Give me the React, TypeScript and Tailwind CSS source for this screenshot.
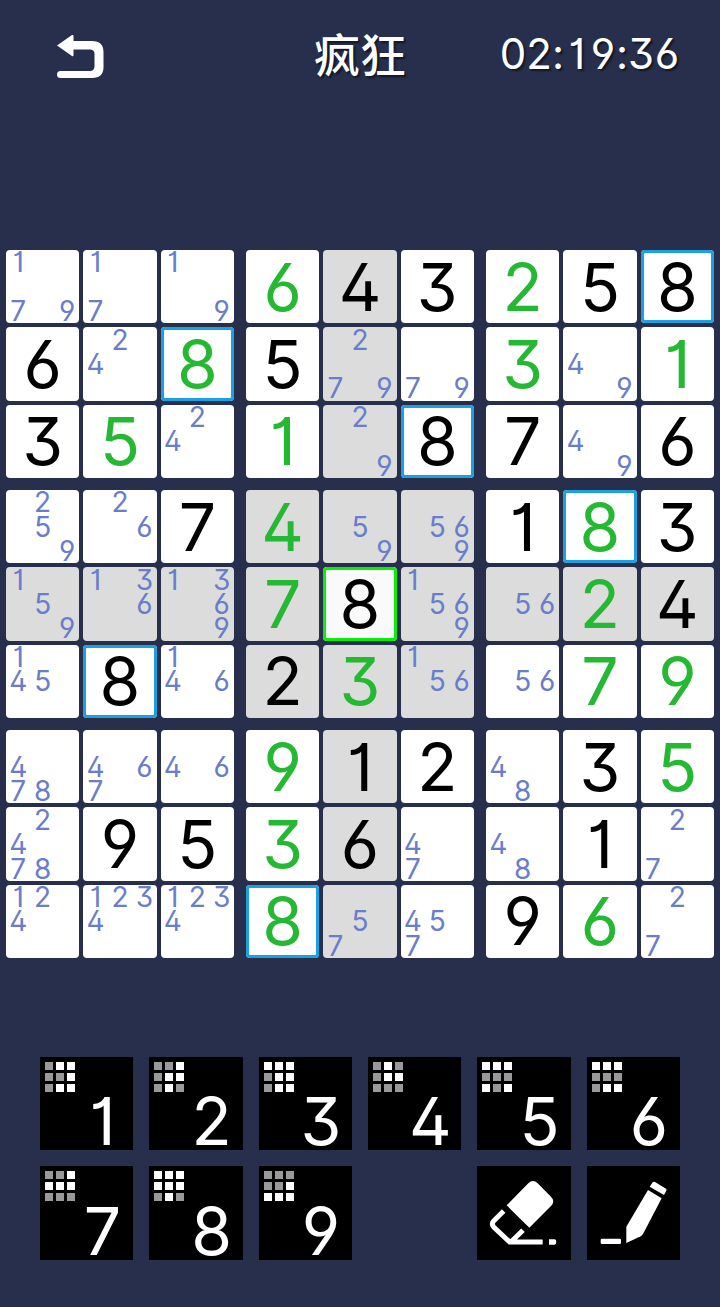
import React from "react";

// "*" = pencil notes, "+" = filled in by the player, plain = given
const rows = [
  "*179 *17 *19 +6 4 3 +2 5 8",
  "6 *24 +8 5 *279 *79 +3 *49 +1",
  "3 +5 *24 +1 *29 8 7 *49 6",
  "*259 *26 7 +4 *59 *569 1 +8 3",
  "*159 *136 *1369 +7 8 *1569 *56 +2 4",
  "*145 8 *146 2 +3 *156 *56 +7 +9",
  "*478 *467 *46 +9 1 2 *48 3 +5",
  "*2478 9 5 +3 6 *47 *48 1 *27",
  "*124 *1234 *1234 +8 *57 *457 9 +6 *27",
];

const board = rows.map((row) => row.split(" "));

const selected = { row: 4, col: 4 };

// Which boxes already hold each digit
const keys = [
  { digit: 1, done: "011001011" },
  { digit: 2, done: "001011010" },
  { digit: 3, done: "111011011" },
  { digit: 4, done: "010011000" },
  { digit: 5, done: "111000101" },
  { digit: 6, done: "111000011" },
  { digit: 7, done: "001111000" },
  { digit: 8, done: "111111010" },
  { digit: 9, done: "000001111" },
];

const digitFont =
  "font-['Inter',sans-serif] [font-feature-settings:'cv01','cv02','cv03','cv04','cv09']";

const three = [0, 1, 2];
const nine = [0, 1, 2, 3, 4, 5, 6, 7, 8];

const Cell: React.FC<{ row: number; col: number }> = ({ row, col }) => {
  const value = board[row][col];
  const isNotes = value.startsWith("*");
  const isPlayer = value.startsWith("+");
  const digit = value.replace("+", "");
  const isSelected = row === selected.row && col === selected.col;
  const sameBox =
    Math.floor(row / 3) === Math.floor(selected.row / 3) &&
    Math.floor(col / 3) === Math.floor(selected.col / 3);
  const isShaded = row === selected.row || col === selected.col || sameBox;

  let background = "bg-white";
  if (isSelected) background = "bg-[#fafafa]";
  else if (isShaded) background = "bg-[#dcdcdc]";

  let outline = "";
  if (isSelected) outline = "inset-ring-3 inset-ring-[#08f008]";
  else if (digit === "8") outline = "inset-ring-3 inset-ring-[#1ba0e2]";

  return (
    <button
      type="button"
      className={`flex aspect-square min-w-0 items-center justify-center rounded ${background} ${outline}`}
    >
      {isNotes ? (
        <span className="grid h-full w-full grid-cols-3 grid-rows-3">
          {nine.map((n) => (
            <span
              key={n}
              className="flex min-h-0 min-w-0 items-center justify-center text-[28px] leading-6 text-[#6a7dcb]"
            >
              {value.includes(String(n + 1)) ? n + 1 : ""}
            </span>
          ))}
        </span>
      ) : (
        <span
          className={`text-[66px] leading-none ${isPlayer ? "text-[#25b832]" : "text-black"}`}
        >
          {digit}
        </span>
      )}
    </button>
  );
};

const Timer: React.FC<{ time: string }> = ({ time }) => (
  <time className="flex justify-self-end text-[42px] leading-15 text-white text-shadow-[2px_2px_2px_#0008]">
    {time.split("").map((char, i) => (
      <span
        key={i}
        className={`flex justify-center ${char === ":" ? "w-3" : "w-[26px]"}`}
      >
        {char}
      </span>
    ))}
  </time>
);

const App: React.FC = () => {
  return (
    <main
      className={`min-h-screen w-full bg-[#272f4d] pb-12 ${digitFont}`}
    >
      {/* Header */}
      <header className="grid grid-cols-3 items-start px-10 pt-6">
        <button type="button" aria-label="返回" className="mt-2.5 ml-4 w-12">
          <svg viewBox="0 0 48 46" className="w-12 fill-white">
            <path d="M1 11.5 L16 1 Q17.5 0.5 17.5 2 V7 H36 Q47.5 7 47.5 18 V33 Q47.5 44 36 44 H4.5 Q1 44 1 40.5 Q1 37 4.5 37 H34 Q38.5 37 38.5 32 V20 Q38.5 15.5 34 15.5 H17.5 V21 Q17.5 23 16 22 Z" />
          </svg>
        </button>
        <h1 className="text-center text-[46px] leading-14 font-medium whitespace-nowrap text-white font-['Noto_Sans_CJK_SC',sans-serif] text-shadow-[2px_2px_2px_#0008]">
          疯狂
        </h1>
        <Timer time="02:19:36" />
      </header>

      {/* Board */}
      <section className="mt-[166px] grid grid-cols-3 gap-3 px-1.5">
        {nine.map((box) => (
          <div key={box} className="grid grid-cols-3 gap-1">
            {three.map((r) =>
              three.map((c) => (
                <Cell
                  key={`${r}${c}`}
                  row={Math.floor(box / 3) * 3 + r}
                  col={(box % 3) * 3 + c}
                />
              )),
            )}
          </div>
        ))}
      </section>

      {/* Keypad */}
      <section className="mt-[99px] grid grid-cols-6 gap-4 px-10">
        {keys.map((key) => (
          <button
            key={key.digit}
            type="button"
            className="flex aspect-square justify-between bg-black p-[5px]"
          >
            <span className="grid grid-cols-3 gap-[3px] self-start">
              {key.done.split("").map((d, i) => (
                <span
                  key={i}
                  className={`size-2 ${d === "1" ? "bg-white" : "bg-[#999999]"}`}
                />
              ))}
            </span>
            <span className="mr-1 w-11 self-end text-center text-[66px] leading-12 text-white">
              {key.digit}
            </span>
          </button>
        ))}
        <button
          type="button"
          aria-label="擦除"
          className="col-start-5 aspect-square bg-black"
        >
          <svg viewBox="0 0 280 280" className="h-full w-full">
            <path
              d="M89 118 L154 52 Q168 38 182 52 L222 92 Q236 106 222 120 L157 185 Z"
              fill="white"
            />
            <path
              d="M80 135 L50 165 Q42 173 50 183 L98 228 H197 M138 193 L104 226"
              fill="none"
              stroke="white"
              strokeWidth="15"
            />
            <path
              d="M216 220 H233 Q238 221 238 228 Q238 235 233 236 H216 Z"
              fill="white"
            />
          </svg>
        </button>
        <button
          type="button"
          aria-label="笔记"
          className="aspect-square bg-black"
        >
          <svg viewBox="0 0 280 280" className="h-full w-full fill-white">
            <path d="M183 72 L224 97 L168 204 Q165 208 161 211 L118 231 V182 Z" />
            <path d="M197 49 Q200 46 204 48 L237 68 Q240 71 238 74 L231 87 L188 62 Z" />
            <rect x="41" y="218" width="61" height="16" rx="4" />
          </svg>
        </button>
      </section>
    </main>
  );
};

export default App;
